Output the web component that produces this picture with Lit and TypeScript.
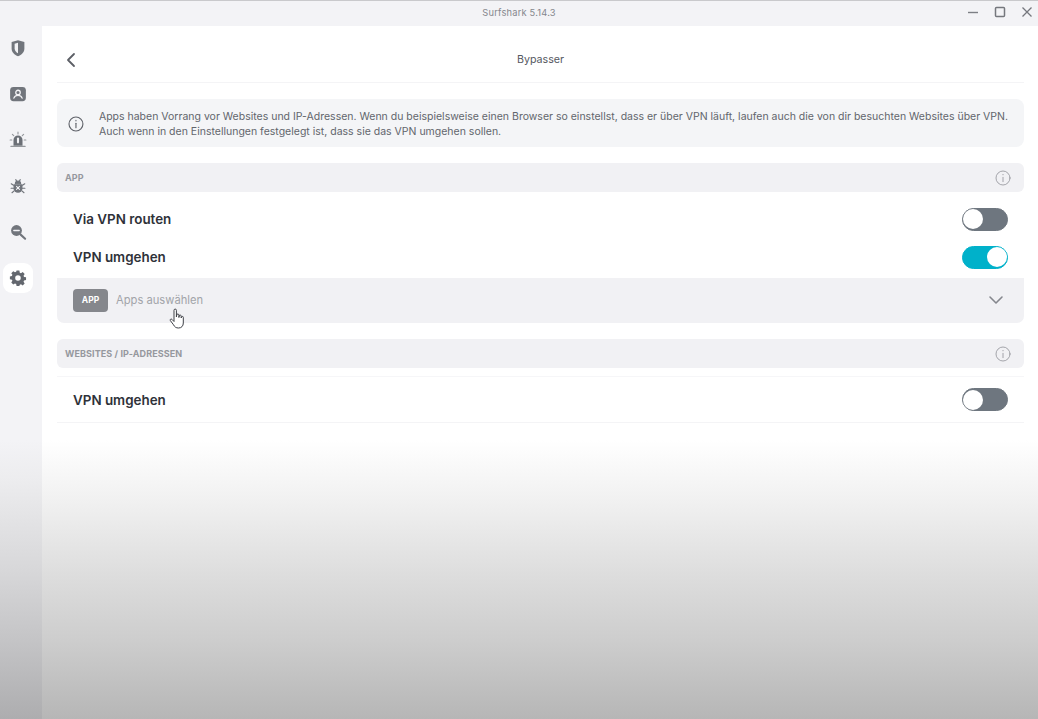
import { LitElement, html, css, svg } from "lit";
import { customElement } from "lit/decorators.js";

const info = (s: number, c: string, w: number) => html`<svg width=${s} height=${s} viewBox="0 0 24 24" fill="none" stroke=${c} stroke-width=${w} stroke-linecap="round"><circle cx="12" cy="12" r="10.5"/><path d="M12 11v6.5"/><path d="M12 6.6v.6"/></svg>`;

const navIcons = [
  svg`<path d="M12 1.500 3.500 4v8.500c0 5.200 3.800 8.500 8.500 10.500 4.700-2 8.500-5.300 8.500-10.500V4z" fill="#71757c"/><path d="M12 5 7.500 6.300v6c0 3.200 2 5.400 4.500 6.700z" fill="#f3f3f6"/>`,
  svg`<rect x="1.500" y="2.500" width="21" height="19" rx="4.500" fill="#71757c"/><circle cx="12" cy="10" r="3" fill="none" stroke="#f3f3f6" stroke-width="1.700"/><path d="M6.500 17.500c1-2.800 3-3.800 5.500-3.800s4.500 1 5.500 3.800" fill="none" stroke="#f3f3f6" stroke-width="1.700" stroke-linecap="round"/>`,
  svg`<path d="M6 19.500V12a6 6 0 0 1 12 0v7.500z" fill="#6b6f76"/><rect x="10.600" y="8.500" width="2.800" height="8" rx="1.400" fill="#f3f3f6"/><path d="M2.500 20.500h19M12 1.500V4M4.500 4.500l1.800 1.800M19.500 4.500l-1.800 1.800M1.500 12h2.200M20.300 12h2.200" stroke="#94979c" stroke-width="1.500" stroke-linecap="round"/>`,
  svg`<path d="M7 9.500h10a1 1 0 0 1 1 1V15a6 6 0 0 1-12 0v-4.500a1 1 0 0 1 1-1z" fill="#71757c"/><path d="M8.500 9a3.500 3.500 0 0 1 7 0zM9 3.500l1.500 2.500M15 3.500 13.500 6M6 11 3 9M18 11l3-2M6 15H2.800M18 15h3.200M6.800 18.500 4 21M17.200 18.500 20 21" fill="#71757c" stroke="#71757c" stroke-width="1.500" stroke-linecap="round"/><path d="m10 12.500 4 4M14 12.500l-4 4" stroke="#f3f3f6" stroke-width="1.400" stroke-linecap="round"/>`,
  svg`<circle cx="10" cy="10" r="7.200" fill="#71757c"/><path d="M6.500 10h7" stroke="#f3f3f6" stroke-width="2" stroke-linecap="round"/><path d="m15.500 15.500 6 5.500" stroke="#71757c" stroke-width="2.800" stroke-linecap="round"/>`,
  svg`<path fill-rule="evenodd" fill="#63676e" d="M10 2h4l.6 2.900 1.700.7 2.500-1.600 2.800 2.800-1.600 2.500.7 1.700 2.900.6v4l-2.900.6-.7 1.700 1.600 2.500-2.800 2.800-2.500-1.600-1.700.7L14 24h-4l-.6-2.900-1.700-.7-2.500 1.600-2.800-2.800 1.600-2.500-.7-1.700L.4 14.400v-4l2.900-.6.7-1.700L2.400 5.600l2.800-2.800 2.500 1.600 1.700-.7zM12 8.500a4 4 0 1 0 0 8 4 4 0 0 0 0-8z" transform="translate(0.800 0.300) scale(.93)"/>`,
];

@customElement("app-root")
export class AppRoot extends LitElement {
  static styles = css`
    :host { display: block; width: 1038px; height: 719px; position: relative; overflow: hidden; font-family: Inter, "Liberation Sans", sans-serif; background: #fff; }
    .titlebar { height: 26px; box-sizing: border-box; border-top: 1px solid #c9c9cc; padding-bottom: 3px; background: #f3f3f6; display: flex; align-items: center; justify-content: center; position: relative; font-size: 9.300px; color: #85878d; letter-spacing: .2px; }
    .winbtns { position: absolute; right: 5px; top: 0; bottom: 3px; display: flex; gap: 14px; align-items: center; }
    .body { display: flex; height: 693px; }
    .side { width: 42px; background: #f3f3f6; display: flex; flex-direction: column; align-items: center; padding: 7px 6px 0 0; box-sizing: border-box; gap: 16px; flex: none; }
    .nav { width: 30px; height: 30px; display: flex; align-items: center; justify-content: center; border-radius: 9px; }
    .nav.active { background: #fff; }
    .main { flex: 1; min-width: 0; display: flex; flex-direction: column; }
    .head { height: 57px; flex: none; padding-top: 10px; display: flex; align-items: center; justify-content: center; position: relative; font-size: 10.700px; color: #55585f; margin: 0 14px 0 15px; border-bottom: 1px solid #f4f4f6; box-sizing: border-box; }
    .back { position: absolute; left: 7px; top: 26px; display: flex; }
    .content { padding: 16px 14px 0 15px; display: flex; flex-direction: column; }
    .note { height: 48px; box-sizing: border-box; background: #f4f5f7; border-radius: 8px; display: flex; align-items: center; padding: 2px 16px 0 11px; gap: 15px; font-size: 10.500px; line-height: 15.500px; color: #62656c; margin-bottom: 16px; white-space: nowrap; }
    .sec { height: 29px; flex: none; background: #f1f1f4; border-radius: 6px; display: flex; align-items: center; justify-content: space-between; padding: 0 13px 0 8px; font-size: 9px; font-weight: 700; color: #96989e; }
    .sec span { letter-spacing: .1px; }
    .row { display: flex; align-items: center; justify-content: space-between; padding: 0 16px; font-size: 13.400px; font-weight: 600; color: #2f3239; height: 38px; }
    .t { width: 46px; height: 23px; box-sizing: border-box; border-radius: 12px; background: #6e767f; border: 1.500px solid #6e767f; display: flex; align-items: center; }
    .t i { width: 20px; height: 20px; border-radius: 50%; background: #fff; display: block; }
    .t.on { background: #00b1ca; border-color: #00b1ca; justify-content: flex-end; }
    .select { height: 45px; box-sizing: border-box; background: #f1f1f4; border-radius: 0 0 7px 7px; display: flex; align-items: center; padding: 0 20px 1px 16px; margin-bottom: 16px; font-size: 11.200px; color: #a2a4a9; }
    .badge { width: 35px; height: 23px; margin-right: 8px; background: #85878c; color: #fff; border-radius: 4px; font-size: 8.500px; font-weight: 700; display: flex; align-items: center; justify-content: center; }
    .chev { margin-left: auto; display: flex; }
    .g1 { padding: 8px 0 2px; }
    .g2 { height: 47px; border-top: 1px solid #f6f6f8; border-bottom: 1px solid #f4f4f6; margin-top: 8px; box-sizing: border-box; padding: 0 16px; display: flex; align-items: center; justify-content: space-between; font-size: 13.400px; font-weight: 600; color: #2f3239; }
    .hand { position: absolute; left: 169px; top: 308px; }
    .fade { position: absolute; left: 42px; right: 0; top: 440px; bottom: 0; background: linear-gradient(180deg, rgba(255,255,255,0) 0%, #f2f2f2 20%, #dedede 47%, #cdcdcd 72%, #b6b6b6 100%); pointer-events: none; }
    .fade-side { position: absolute; left: 0; width: 42px; top: 440px; bottom: 0; background: linear-gradient(180deg, #f3f3f6 0%, #ececee 15%, #d7d7d9 47%, #c4c4c6 72%, #adadaf 100%); pointer-events: none; }
  `;

  private toggle(on: boolean) {
    return html`<div class="t ${on ? "on" : ""}"><i></i></div>`;
  }

  render() {
    return html`
      <div class="titlebar">Surfshark 5.14.3
        <div class="winbtns">
          <svg width="12" height="12" viewBox="0 0 12 12"><path d="M1 6.500h10" stroke="#7d7f85" stroke-width="1.400"/></svg>
          <svg width="14" height="14" viewBox="0 0 14 14"><rect x="2.500" y="2.500" width="9" height="9" rx="1" fill="none" stroke="#75777d" stroke-width="1.500"/></svg>
          <svg width="12" height="12" viewBox="0 0 12 12"><path d="m1.500 1.500 9 9M10.500 1.500l-9 9" stroke="#75777d" stroke-width="1.300"/></svg>
        </div>
      </div>
      <div class="body">
        <aside class="side">
          ${navIcons.map((p, i) => html`<div class="nav ${i === 5 ? "active" : ""}"><svg width="18" height="18" viewBox="0 0 24 24">${p}</svg></div>`)}
        </aside>
        <main class="main">
          <div class="head">
            <span class="back"><svg width="14" height="16" viewBox="0 0 14 16" fill="none" stroke="#5c5f66" stroke-width="1.800" stroke-linecap="round" stroke-linejoin="round"><path d="M10 2 4 8l6 6"/></svg></span>
            Bypasser
          </div>
          <div class="content">
            <div class="note">
              ${info(18, "#5f6269", 1.7)}
              <div>Apps haben Vorrang vor Websites und IP-Adressen. Wenn du beispielsweise einen Browser so einstellst, dass er über VPN läuft, laufen auch die von dir besuchten Websites über VPN.<br>Auch wenn in den Einstellungen festgelegt ist, dass sie das VPN umgehen sollen.</div>
            </div>
            <div class="sec"><span>APP</span>${info(16, "#8f9197", 1.200)}</div>
            <div class="g1">
              <div class="row">Via VPN routen ${this.toggle(false)}</div>
              <div class="row">VPN umgehen ${this.toggle(true)}</div>
            </div>
            <div class="select">
              <span class="badge">APP</span>Apps auswählen
              <span class="chev"><svg width="16" height="10" viewBox="0 0 16 10" fill="none" stroke="#85878d" stroke-width="1.600" stroke-linecap="round" stroke-linejoin="round"><path d="m2 2 6 6 6-6"/></svg></span>
            </div>
            <div class="sec"><span>WEBSITES / IP-ADRESSEN</span>${info(16, "#8f9197", 1.200)}</div>
            <div class="g2">VPN umgehen ${this.toggle(false)}</div>
          </div>
        </main>
      </div>
      <div class="fade"></div>
      <div class="fade-side"></div>
      <svg class="hand" width="16" height="22" viewBox="0 0 16 22" fill="#fff" stroke="#3e4046" stroke-width="1" stroke-linejoin="round"><path d="M5 2.300a1.200 1.200 0 0 1 2.400 0V9l.3-2a1.100 1.100 0 0 1 2.200.2V9.500l.3-1.500a1 1 0 0 1 2 .2v1.800l.3-.8a.9.900 0 0 1 1.800.3v5.500c0 3-1.800 5-4.800 5-2.500 0-3.800-1-5-3.200L1.300 12.500c-.6-1 .8-2 1.700-1.100L5 13.500z"/></svg>
    `;
  }
}
